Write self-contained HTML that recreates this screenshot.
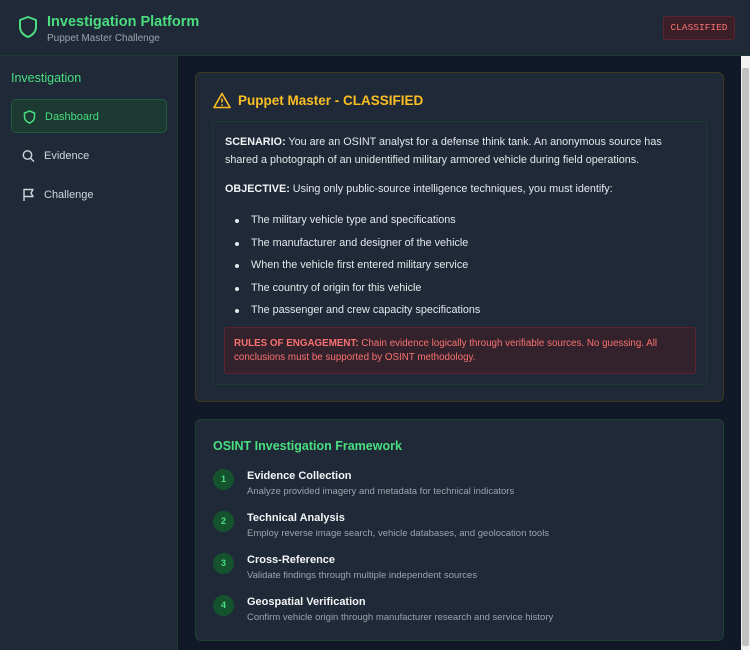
<!DOCTYPE html>
<html><head><meta charset="utf-8"><style>
*{box-sizing:border-box;margin:0;padding:0}
body{width:750px;height:650px;overflow:hidden;background:#111827;font-family:"Liberation Sans",sans-serif;color:#e5e7eb;position:relative}
.hdr{position:absolute;left:0;top:0;width:750px;height:56px;background:#1f2937;border-bottom:1px solid #1e3a34}
.hdr .t{position:absolute;left:47px;top:14px;color:#4ade80;font-weight:bold;font-size:14.5px}
.hdr .s{position:absolute;left:47px;top:33px;color:#9ca3af;font-size:10px}
.badge{position:absolute;left:663px;top:16px;width:72px;height:24px;border:1px solid #5b2530;background:#3a1f28;border-radius:3px;color:#f87171;font-family:"Liberation Mono",monospace;font-size:9.5px;line-height:22px;text-align:center}
.side{position:absolute;left:0;top:56px;width:178px;height:594px;background:#1f2937;border-right:1px solid #1e3a34}
.side h3{position:absolute;left:11px;top:15px;color:#4ade80;font-size:12.5px;font-weight:normal}
.nav{position:absolute;left:11px;width:156px;height:34px;border-radius:5px;font-size:11px;line-height:34px;padding-left:33px;color:#d1d5db}
.nav.a{background:#1c3a32;border:1px solid #215c40;color:#4ade80}
.nav svg{position:absolute;left:11px;top:10px}
.sb{position:absolute;left:741px;top:56px;width:9px;height:594px;background:#f1f1f1}
.sb .th{position:absolute;left:1px;top:12px;width:7px;height:578px;background:#c1c1c1;border-radius:2px}
.card{position:absolute;left:195px;width:529px;background:#1f2937;border-radius:6px}
.c1{top:72px;height:330px;border:1px solid #3d3a22}
.c2{top:419px;height:222px;border:1px solid #1e3f33}
.c1 h2{position:absolute;left:42px;top:20px;color:#fbbf24;font-size:13.5px}
.inner{position:absolute;left:16px;top:48px;width:495px;height:264px;border:1px solid #1e3a34;border-radius:3px;padding:11px 12px;font-size:10.8px;color:#e5e7eb}
.inner p{line-height:18px}
.inner b{color:#f3f4f6}
.inner ul{list-style:none;margin-top:16px}
.inner li{height:22.5px;padding-left:26px;position:relative}
.inner li:before{content:"";position:absolute;left:10px;top:5px;width:4px;height:4px;border-radius:50%;background:#e5e7eb}
.roe{position:absolute;left:11px;top:205px;width:472px;height:47px;background:#33222b;border:1px solid #5b2530;border-radius:3px;padding:9px 9px;color:#f87171;font-size:9.8px;line-height:14px}
.roe b{color:#f87171}
.c2 h2{position:absolute;left:17px;top:19px;color:#4ade80;font-size:12.5px}
.st{position:absolute;left:17px}
.st .n{position:absolute;left:0;top:0;width:21px;height:21px;border-radius:50%;background:#14532d;color:#4ade80;font-size:9px;font-weight:bold;text-align:center;line-height:21px}
.st .h{position:absolute;left:34px;top:1px;font-size:11px;font-weight:bold;color:#f3f4f6;white-space:nowrap}
.st .d{position:absolute;left:34px;top:17px;font-size:9.5px;color:#9ca3af;white-space:nowrap}
</style></head><body>
<div class="hdr">
<svg style="position:absolute;left:18px;top:15px" width="20" height="24" viewBox="0 0 20 24"><path d="M10 2 L18 5 V12 C18 17 14 20.5 10 22 C6 20.5 2 17 2 12 V5 Z" fill="none" stroke="#4ade80" stroke-width="2" stroke-linejoin="round"/></svg>
<div class="t">Investigation Platform</div><div class="s">Puppet Master Challenge</div>
<div class="badge">CLASSIFIED</div></div>
<div class="side"><h3>Investigation</h3>
<div class="nav a" style="top:43px"><svg width="13" height="14" viewBox="0 0 13 14"><path d="M6.5 1 L11.5 3 V7 C11.5 10 9 12 6.5 13 C4 12 1.5 10 1.5 7 V3 Z" fill="none" stroke="#4ade80" stroke-width="1.5"/></svg>Dashboard</div>
<div class="nav" style="top:83px"><svg width="13" height="14" viewBox="0 0 13 14"><circle cx="5.5" cy="6" r="4.2" fill="none" stroke="#d1d5db" stroke-width="1.4"/><path d="M8.6 9.2 L12 12.6" stroke="#d1d5db" stroke-width="1.4"/></svg>Evidence</div>
<div class="nav" style="top:122px"><svg width="13" height="14" viewBox="0 0 13 14"><path d="M2 13 V1.5 H11 L9 5 L11 8.5 H2" fill="none" stroke="#d1d5db" stroke-width="1.4" stroke-linejoin="round"/></svg>Challenge</div>
</div>
<div class="card c1">
<svg style="position:absolute;left:17px;top:19px" width="18" height="17" viewBox="0 0 18 17"><path d="M9 1.5 L17 15.5 H1 Z" fill="none" stroke="#fbbf24" stroke-width="1.6" stroke-linejoin="round"/><path d="M9 6.5 V10.5" stroke="#fbbf24" stroke-width="1.6"/><circle cx="9" cy="13" r=".9" fill="#fbbf24"/></svg>
<h2>Puppet Master - CLASSIFIED</h2>
<div class="inner">
<p><b>SCENARIO:</b> You are an OSINT analyst for a defense think tank. An anonymous source has shared a photograph of an unidentified military armored vehicle during field operations.</p>
<p style="margin-top:11px"><b>OBJECTIVE:</b> Using only public-source intelligence techniques, you must identify:</p>
<ul><li>The military vehicle type and specifications</li><li>The manufacturer and designer of the vehicle</li><li>When the vehicle first entered military service</li><li>The country of origin for this vehicle</li><li>The passenger and crew capacity specifications</li></ul>
<div class="roe"><b>RULES OF ENGAGEMENT:</b> Chain evidence logically through verifiable sources. No guessing. All conclusions must be supported by OSINT methodology.</div>
</div></div>
<div class="card c2"><h2>OSINT Investigation Framework</h2>
<div class="st" style="top:49px"><div class="n">1</div><div class="h">Evidence Collection</div><div class="d">Analyze provided imagery and metadata for technical indicators</div></div>
<div class="st" style="top:91px"><div class="n">2</div><div class="h">Technical Analysis</div><div class="d">Employ reverse image search, vehicle databases, and geolocation tools</div></div>
<div class="st" style="top:133px"><div class="n">3</div><div class="h">Cross-Reference</div><div class="d">Validate findings through multiple independent sources</div></div>
<div class="st" style="top:175px"><div class="n">4</div><div class="h">Geospatial Verification</div><div class="d">Confirm vehicle origin through manufacturer research and service history</div></div>
</div>
<div class="sb"><div class="th"></div></div>
</body></html>
